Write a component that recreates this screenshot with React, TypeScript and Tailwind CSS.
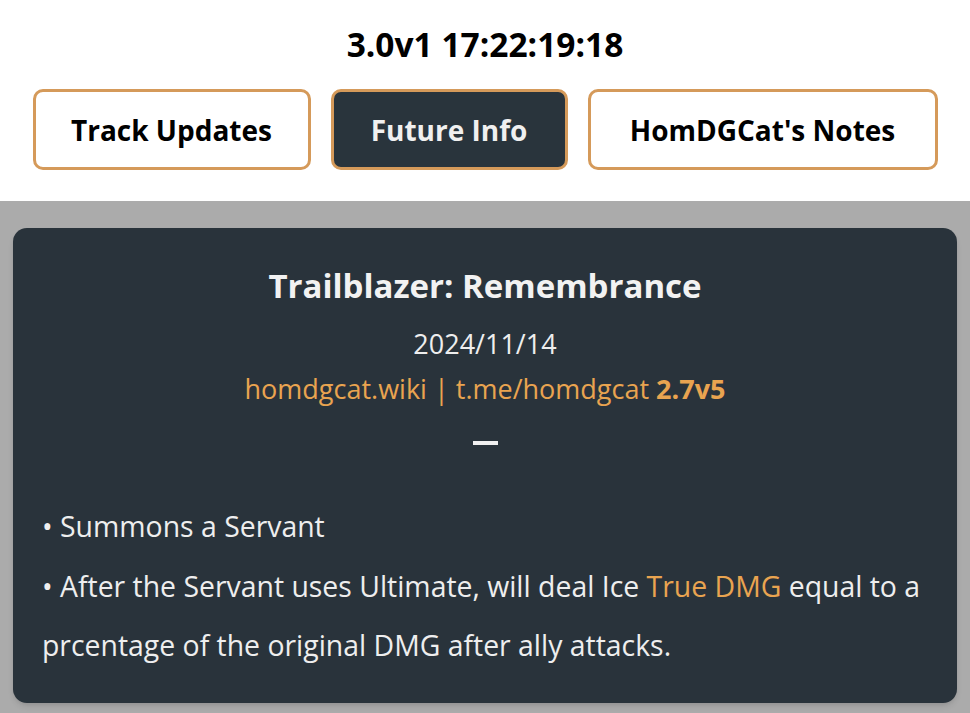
import React from 'react';

const tabs = [
  { label: 'Track Updates', width: 'w-[278px]', active: false },
  { label: 'Future Info', width: 'w-[237px]', active: true },
  { label: "HomDGCat's Notes", width: 'w-[350px]', active: false },
];

export default function App() {
  return (
    <div className="min-h-screen bg-[#ababab] font-['Open_Sans',sans-serif]">
      {/* Header */}
      <header className="h-[201px] bg-white flex flex-col items-center">
        <div className="pt-[24px] text-[33.5px] leading-[40px] font-bold text-black">3.0v1 17:22:19:18</div>
        <nav className="mt-[25px] flex gap-[20px]">
          {tabs.map((t) => (
            <button
              key={t.label}
              className={`${t.width} h-[81px] rounded-[10px] border-[3px] border-[#d59a5a] text-[28px] font-bold flex items-center justify-center ${
                t.active ? 'bg-[#29343c] text-[#f0f0f0]' : 'bg-white text-black'
              }`}
            >
              {t.label}
            </button>
          ))}
        </nav>
      </header>

      {/* Card */}
      <main className="px-[13px] pt-[27px]">
        <div className="rounded-[14px] bg-[#29333b] px-[29px] pt-[36px] pb-[27px] text-[#eeeeee] shadow-md">
          <div className="text-center">
            <h1 className="text-[33px] leading-[44px] font-bold text-[#f2f2f2]">Trailblazer: Remembrance</h1>
            <p className="mt-[13px] text-[27px] leading-[45px]">2024/11/14</p>
            <p className="text-[27px] leading-[45px] text-[#e9a450]">
              homdgcat.wiki | t.me/homdgcat <span className="font-bold">2.7v5</span>
            </p>
            <div className="mx-auto mt-[30px] w-[25px] h-[4px] bg-[#f0f0f0]" />
          </div>
          <div className="mt-[52px] text-[28.4px] leading-[59.5px]">
            <p>• Summons a Servant</p>
            <p>
              • After the Servant uses Ultimate, will deal Ice <span className="text-[#e9a450]">True DMG</span> equal
              to a prcentage of the original DMG after ally attacks.
            </p>
          </div>
        </div>
      </main>
    </div>
  );
}
